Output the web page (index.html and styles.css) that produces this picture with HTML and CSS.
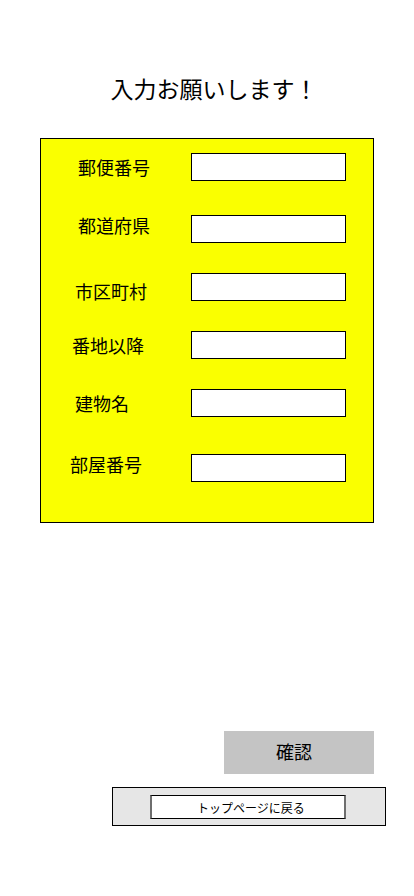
FILE: index.html
```html
<!DOCTYPE html>
<html lang="ja">
<head>
  <meta charset="UTF-8">
  <title>住所入力</title>
  <link rel="stylesheet" href="styles.css">
</head>
<body>
  <h1 class="title">入力お願いします！</h1>

  <form class="address-form">
    <div class="field">
      <label class="field-label label-a" for="zip">郵便番号</label>
      <input class="field-input" type="text" id="zip">
    </div>
    <div class="field gap-b">
      <label class="field-label label-a up" for="pref">都道府県</label>
      <input class="field-input" type="text" id="pref">
    </div>
    <div class="field">
      <label class="field-label label-b down" for="city">市区町村</label>
      <input class="field-input" type="text" id="city">
    </div>
    <div class="field">
      <label class="field-label label-c" for="street">番地以降</label>
      <input class="field-input" type="text" id="street">
    </div>
    <div class="field">
      <label class="field-label label-b" for="building">建物名</label>
      <input class="field-input" type="text" id="building">
    </div>
    <div class="field gap-c">
      <label class="field-label label-d up" for="room">部屋番号</label>
      <input class="field-input" type="text" id="room">
    </div>
  </form>

  <div class="actions">
    <button class="confirm-btn" type="button">確認</button>
  </div>

  <div class="back-bar">
    <button class="back-btn" type="button">トップページに戻る</button>
  </div>
</body>
</html>
```

FILE: styles.css
```css
body {
  margin: 0;
  font-family: "Noto Sans CJK JP", "Noto Sans", sans-serif;
  color: #000;
  background: #fff;
}

.title {
  margin: 0;
  padding: 72px 0 2px 14px;
  height: 32px;
  line-height: 32px;
  font-size: 23px;
  font-weight: normal;
  text-align: center;
}

.address-form {
  box-sizing: border-box;
  width: 334px;
  margin: 32px 0 0 40px;
  padding: 14px 0 40px;
  background: #faff00;
  border: 1px solid #000;
}

.field {
  display: flex;
  align-items: center;
  height: 28px;
  margin-top: 30px;
}

.field:first-child {
  margin-top: 0;
}

.gap-b {
  margin-top: 34px;
}

.gap-c {
  margin-top: 37px;
}

.field-label {
  box-sizing: border-box;
  width: 150px;
  font-size: 18px;
  line-height: 24px;
}

.label-a { padding-left: 37px; }
.label-b { padding-left: 34px; }
.label-c { padding-left: 31px; }
.label-d { padding-left: 29px; }

.up { margin-bottom: 8px; }
.down { margin-top: 8px; }

.field-input {
  box-sizing: border-box;
  width: 155px;
  height: 28px;
  margin: 0;
  padding: 0 4px;
  border: 1px solid #000;
  background: #fff;
  font-size: 14px;
}

.actions {
  display: flex;
  justify-content: flex-end;
  width: 334px;
  margin: 208px 0 0 40px;
}

.confirm-btn {
  width: 150px;
  height: 43px;
  padding: 0 10px 4px 0;
  border: none;
  background: #c4c4c4;
  font-family: inherit;
  font-size: 18px;
  color: #000;
}

.back-bar {
  box-sizing: border-box;
  width: 274px;
  height: 39px;
  margin: 13px 0 0 112px;
  padding: 7px 0 0 37px;
  background: #e6e6e6;
  border: 1px solid #000;
}

.back-btn {
  display: block;
  box-sizing: border-box;
  width: 196px;
  height: 24px;
  padding: 0 0 0 6px;
  background: #fff;
  border: 1px solid #000;
  border-left: 2px solid #6e6e6e;
  border-right: 2px solid #6e6e6e;
  font-family: inherit;
  font-size: 12px;
  color: #000;
}
```
